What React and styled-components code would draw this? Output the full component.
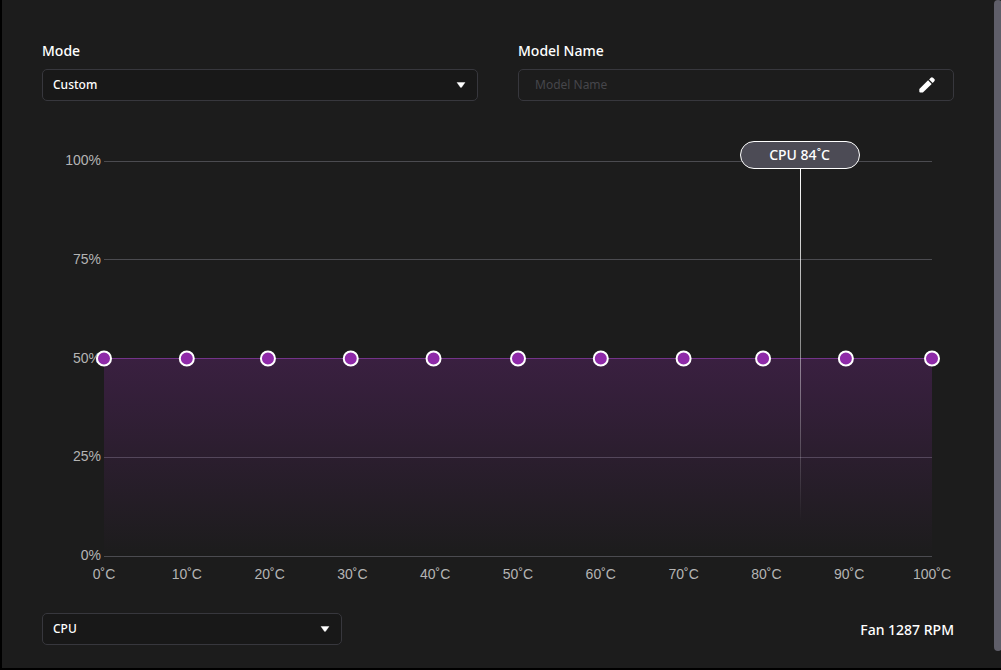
import React, {useState} from "react";
import styled, {createGlobalStyle} from "styled-components";

const color = {
    page: '#000000',
    panel: '#1c1c1c',
    field: '#181818',
    border: '#37373d',
    grid: '#4b4b50',
    axis: '#b4b4b4',
    purple: '#8e2aa8',
    badge: '#4c4b55',
    scroll: '#5f5e69',
    white: '#ffffff'
};

const font = {
    ui: '"Noto Sans", "Open Sans", sans-serif',
    chart: '"Liberation Sans", Arial, sans-serif'
};

const PLOT_HEIGHT = 395;

const GlobalStyle = createGlobalStyle`
    * {
        box-sizing: border-box;
    }

    body {
        margin: 0;
        background: ${color.page};
        color: ${color.white};
        font-family: ${font.ui};
    }
`;

const Page = styled.div`
    display: flex;
    align-items: stretch;
    padding: 0 0 2px 2px;
    overflow: hidden;
`;

const Panel = styled.main`
    flex: 1;
    min-width: 0;
    padding: 40px 40px 23px;
    background: ${color.panel};
`;

const ScrollTrack = styled.div`
    flex: none;
    width: 7px;
    padding-bottom: 17px;
    background: ${color.panel};
`;

const ScrollThumb = styled.div`
    width: 8px;
    height: 100%;
    border-radius: 4px;
    background: ${color.scroll};
`;

const FieldRow = styled.div`
    display: grid;
    grid-template-columns: 1fr 1fr;
    gap: 40px;
`;

const Field = styled.div`
    display: flex;
    flex-direction: column;
    gap: 7px;
`;

const Label = styled.label`
    font-size: 14px;
    font-weight: 500;
    line-height: 22px;
`;

const Control = styled.div`
    display: flex;
    position: relative;
    width: ${({$width}) => $width || '100%'};
    height: 32px;

    svg {
        position: absolute;
        top: 0;
        bottom: 0;
        right: ${({$iconRight}) => $iconRight || '12px'};
        margin: auto 0;
        pointer-events: none;
    }
`;

const Select = styled.select`
    appearance: none;
    width: 100%;
    padding: 0 32px 2px 10px;
    border: 1px solid ${color.border};
    border-radius: 5px;
    background: ${color.field};
    font-family: inherit;
    font-size: 12px;
    font-weight: 500;
    color: ${color.white};
`;

const TextInput = styled.input`
    width: 100%;
    padding: 0 48px 2px 16px;
    border: 1px solid ${color.border};
    border-radius: 5px;
    background: transparent;
    font-family: inherit;
    font-size: 12px;
    color: ${color.white};

    &::placeholder {
        color: #46464b;
        opacity: 1;
    }
`;

const Chart = styled.section`
    display: grid;
    grid-template-columns: 62px 1fr;
    margin-top: 60px;
    padding-right: 22px;
    font-family: ${font.chart};
    font-size: 14px;
    line-height: 16px;
    color: ${color.axis};
`;

const YAxis = styled.div`
    display: flex;
    flex-direction: column;
    justify-content: space-between;
    height: ${PLOT_HEIGHT + 16}px;
    margin: -9px 0 -7px;
    padding-right: 3px;
    text-align: right;
`;

const Plot = styled.div`
    position: relative;
    height: ${PLOT_HEIGHT}px;
`;

const PlotSvg = styled.svg`
    display: block;
    width: 100%;
    height: 100%;
    overflow: visible;
`;

const XAxis = styled.div`
    display: flex;
    grid-column: 2;
    justify-content: space-between;
    margin-top: 10px;
`;

const XTick = styled.span`
    display: flex;
    justify-content: center;
    width: 0;
    white-space: nowrap;
`;

const Marker = styled.div`
    display: flex;
    flex-direction: column;
    align-items: center;
    position: absolute;
    top: -20px;
    width: 120px;
    height: 380px;
    transform: translateX(-50%);
    pointer-events: none;
`;

const MarkerBadge = styled.div`
    width: 100%;
    height: 28px;
    border: 1px solid ${color.white};
    border-radius: 14px;
    background: ${color.badge};
    font-family: ${font.ui};
    font-size: 14px;
    font-weight: 500;
    line-height: 26px;
    text-align: center;
    color: ${color.white};
`;

const MarkerLine = styled.div`
    flex: 1;
    width: 1px;
    margin-left: 1px;
    background: linear-gradient(${color.white}, rgba(255, 255, 255, 0));
`;

const Footer = styled.div`
    display: flex;
    align-items: center;
    justify-content: space-between;
    margin-top: 31px;
`;

const FanSpeed = styled.output`
    padding-top: 2px;
    font-size: 14px;
    font-weight: 500;
    line-height: 20px;
`;

const levels = [100, 75, 50, 25, 0];
const temperatures = [0, 10, 20, 30, 40, 50, 60, 70, 80, 90, 100];

const curve = [
    {temp: 0, fan: 50},
    {temp: 10, fan: 50},
    {temp: 19.8, fan: 50},
    {temp: 29.8, fan: 50},
    {temp: 39.8, fan: 50},
    {temp: 50, fan: 50},
    {temp: 60, fan: 50},
    {temp: 70, fan: 50},
    {temp: 79.6, fan: 50},
    {temp: 89.6, fan: 50},
    {temp: 100, fan: 50}
];

const Caret = () => (
    <svg width="10" height="6" viewBox="0 0 10 6" aria-hidden="true">
        <path d="M1 0.5h8L5.6 5.2a0.8 0.8 0 0 1-1.2 0z" fill={color.white} stroke={color.white} strokeWidth="0.4"
              strokeLinejoin="round"/>
    </svg>
);

const Pencil = () => (
    <svg width="16" height="16" viewBox="0 0 16 16" fill={color.white} aria-hidden="true">
        <path d="M0.3 12 9.1 3.3l3.6 3.6-8.8 8.7H1.3a1 1 0 0 1-1-1z"/>
        <path d="M10.1 2.4 11.8 0.7a1.6 1.6 0 0 1 2.2 0l1.3 1.3a1.6 1.6 0 0 1 0 2.2l-1.6 1.7z"/>
    </svg>
);

const Dropdown = ({id, value, options, onChange, width, ...rest}) => (
    <Control $width={width}>
        <Select id={id} value={value} onChange={(e) => onChange(e.target.value)} {...rest}>
            {options.map((option) => <option key={option}>{option}</option>)}
        </Select>
        <Caret/>
    </Control>
);

const FanChart = ({source, temp}) => (
    <Chart>
        <YAxis>
            {levels.map((level) => <span key={level}>{level}%</span>)}
        </YAxis>
        <Plot>
            <PlotSvg role="img" aria-label="Fan curve">
                <defs>
                    <linearGradient id="area" x1="0" y1="0" x2="0" y2="1">
                        <stop offset="0" stopColor={color.purple} stopOpacity="0.26"/>
                        <stop offset="1" stopColor={color.purple} stopOpacity="0"/>
                    </linearGradient>
                </defs>
                {levels.map((level) => (
                    <rect key={level} x="0" y={Math.floor((100 - level) / 100 * PLOT_HEIGHT)}
                          width="100%" height="1" fill={color.grid}/>
                ))}
                {curve.slice(1).map((point, i) => (
                    <line key={point.temp}
                          x1={`${curve[i].temp}%`} y1={`${100 - curve[i].fan}%`}
                          x2={`${point.temp}%`} y2={`${100 - point.fan}%`}
                          stroke="#6f3585"/>
                ))}
                <rect x="0" y="50%" width="100%" height="50%" fill="url(#area)"/>
                {curve.map((point) => (
                    <circle key={point.temp} cx={`${point.temp}%`} cy={`${100 - point.fan}%`} r="7"
                            fill={color.purple} stroke={color.white} strokeWidth="2"/>
                ))}
            </PlotSvg>
            <Marker style={{left: `${temp}%`}}>
                <MarkerBadge>{source} {temp}˚C</MarkerBadge>
                <MarkerLine/>
            </Marker>
        </Plot>
        <XAxis>
            {temperatures.map((t) => <XTick key={t}>{t}˚C</XTick>)}
        </XAxis>
    </Chart>
);

const App = () => {
    const [mode, setMode] = useState('Custom');
    const [modelName, setModelName] = useState('');
    const [source, setSource] = useState('CPU');

    return (
        <Page>
            <GlobalStyle/>
            <Panel>
                <FieldRow>
                    <Field>
                        <Label htmlFor="mode">Mode</Label>
                        <Dropdown id="mode" value={mode} options={['Custom']} onChange={setMode}/>
                    </Field>
                    <Field>
                        <Label htmlFor="model-name">Model Name</Label>
                        <Control $iconRight="19px">
                            <TextInput id="model-name" type="text" placeholder="Model Name" value={modelName}
                                       onChange={(e) => setModelName(e.target.value)}/>
                            <Pencil/>
                        </Control>
                    </Field>
                </FieldRow>

                <FanChart source={source} temp={84}/>

                <Footer>
                    <Dropdown id="source" aria-label="Source" width="300px" value={source} options={['CPU']}
                              onChange={setSource}/>
                    <FanSpeed>Fan 1287 RPM</FanSpeed>
                </Footer>
            </Panel>
            <ScrollTrack>
                <ScrollThumb/>
            </ScrollTrack>
        </Page>
    );
};

export default App;
